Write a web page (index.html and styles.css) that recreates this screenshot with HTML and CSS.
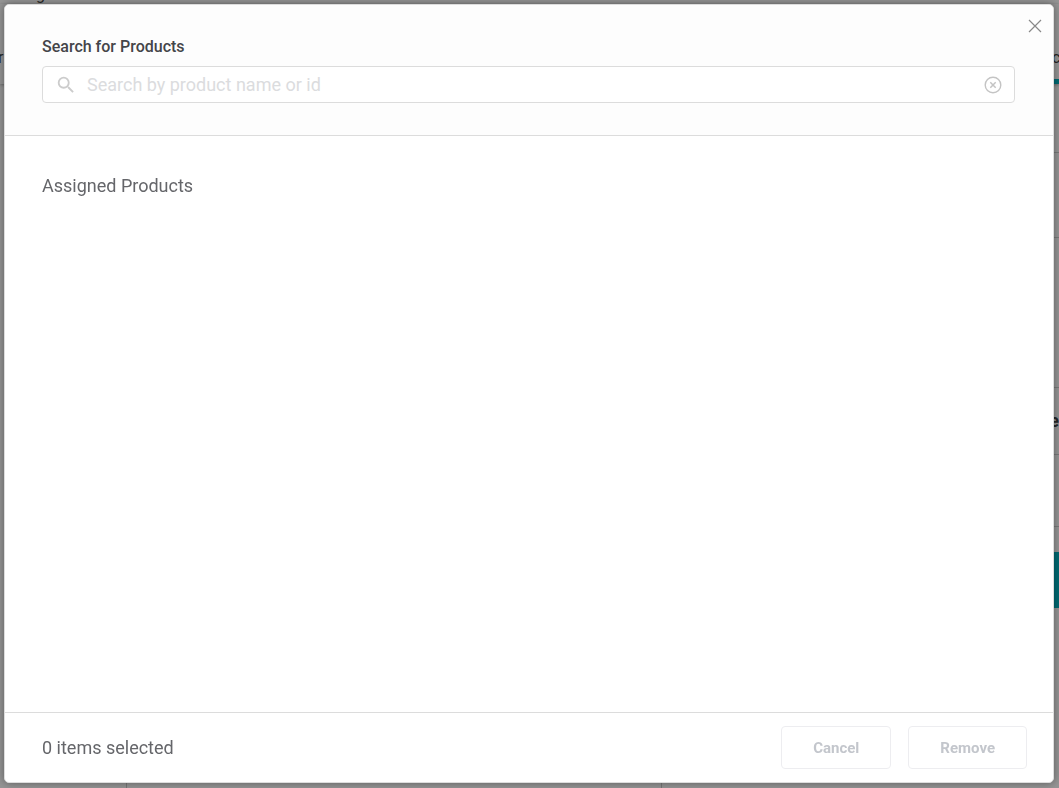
FILE: index.html
```
<!DOCTYPE html>
<html lang="en">
<head>
    <meta charset="UTF-8">
    <meta name="viewport" content="width=device-width, initial-scale=1.0">
    <title>Search for Products</title>
    <link rel="stylesheet" href="styles.css">
</head>
<body>
    <!-- page behind the dialog -->
    <div class="page" aria-hidden="true">
        <div class="page-title">g</div>
        <div class="page-tabs">
            <span>r</span>
            <span class="page-tab-active">c</span>
        </div>
        <div class="page-rows">
            <div class="page-row row-first"></div>
            <div class="page-row row-medium"></div>
            <div class="page-row row-large"></div>
            <div class="page-row row-small">e</div>
            <div class="page-row row-small"></div>
            <div class="page-action"></div>
        </div>
        <div class="page-columns">
            <div></div>
            <div></div>
            <div></div>
        </div>
    </div>

    <div class="overlay">
        <div class="modal" role="dialog" aria-modal="true" aria-label="Search for Products">
            <button class="modal-close" type="button" aria-label="Close">
                <svg width="14" height="14" viewBox="0 0 14 14" fill="none">
                    <path d="M1 1L13 13M13 1L1 13" stroke="currentColor" stroke-width="1.2"/>
                </svg>
            </button>

            <div class="modal-header">
                <label class="search-label" for="search">Search for Products</label>
                <div class="search-box">
                    <svg class="search-icon" width="22" height="22" viewBox="0 0 24 24" fill="currentColor">
                        <path d="M15.5 14h-.79l-.28-.27A6.47 6.47 0 0 0 16 9.5 6.5 6.5 0 1 0 9.5 16c1.61 0 3.09-.59 4.23-1.57l.27.28v.79l5 4.99L20.49 19l-4.99-5zm-6 0C7.01 14 5 11.99 5 9.5S7.01 5 9.5 5 14 7.01 14 9.5 11.99 14 9.5 14z"/>
                    </svg>
                    <input class="search-input" id="search" type="text" placeholder="Search by product name or id">
                    <button class="search-clear" type="button" aria-label="Clear search">
                        <svg width="18" height="18" viewBox="0 0 18 18" fill="none" stroke="currentColor">
                            <circle cx="9" cy="9" r="7.8" stroke-width="1.4"/>
                            <path d="M6.3 6.3L11.7 11.7M11.7 6.3L6.3 11.7" stroke-width="1.5"/>
                        </svg>
                    </button>
                </div>
            </div>

            <div class="modal-body">
                <h2 class="section-title">Assigned Products</h2>
            </div>

            <div class="modal-footer">
                <span class="selected-count">0 items selected</span>
                <div class="footer-actions">
                    <button class="btn" type="button" disabled>Cancel</button>
                    <button class="btn" type="button" disabled>Remove</button>
                </div>
            </div>
        </div>
    </div>
</body>
</html>
```
FILE: styles.css
```
* {
    box-sizing: border-box;
}
body {
    margin: 0;
    font-family: Roboto, "Liberation Sans", sans-serif;
    color: #65666a;
    background: #fff;
}
.page {
    display: flex;
    flex-direction: column;
    height: 100vh;
    overflow: hidden;
    color: #444;
}
.page-title {
    height: 18px;
    margin-top: -14px;
    padding-left: 36px;
    font-size: 16px;
    line-height: 18px;
}
.page-tabs {
    display: flex;
    justify-content: space-between;
    align-items: flex-end;
    height: 80px;
    box-shadow: 0 1px 3px rgba(0, 0, 0, 0.3);
    font-size: 16px;
    line-height: 42px;
}
.page-tabs span {
    margin-left: -2px;
    padding-bottom: 5px;
}
.page-tabs .page-tab-active {
    width: 7px;
    padding-bottom: 0;
    border-bottom: 5px solid #00b5c4;
}
.page-rows {
    align-self: flex-end;
    width: 90%;
    padding-top: 1px;
}
.page-row {
    border-bottom: 1px solid #d0d0d0;
    text-align: right;
    font-size: 18px;
    font-weight: bold;
    line-height: 66px;
}
.row-first {
    height: 68px;
}
.row-medium {
    height: 85px;
}
.row-large {
    height: 150px;
}
.row-small {
    height: 70px;
}
.row-large + .row-small {
    height: 67px;
}
.row-small + .row-small {
    height: 72px;
}
.page-action {
    height: 56px;
    margin-top: 25px;
    background: #00b5c4;
}
.page-columns {
    display: grid;
    grid-template-columns: 126px 1fr 398px;
    flex: 1;
}
.page-columns div + div {
    border-left: 1px solid #ccc;
}
.overlay {
    position: fixed;
    inset: 0;
    display: flex;
    padding: 4px 5px 5px 4px;
    background: rgba(0, 0, 0, 0.42);
}
.modal {
    position: relative;
    display: flex;
    flex: 1;
    flex-direction: column;
    border: 1px solid #ddd;
    border-radius: 5px;
    background: #fff;
    box-shadow: 0 0 8px rgba(0, 0, 0, 0.4);
}
.modal-close {
    position: absolute;
    top: 14px;
    right: 11px;
    display: flex;
    padding: 0;
    border: none;
    background: none;
    color: #888;
    cursor: pointer;
}
.modal-header {
    padding: 32px 38px 32px 37px;
    border-bottom: 1px solid #dcdcdc;
    border-radius: 5px 5px 0 0;
    background: #fdfdfd;
}
.search-label {
    display: block;
    margin-bottom: 9px;
    color: #444549;
    font-size: 16px;
    font-weight: 500;
    line-height: 20px;
}
.search-box {
    display: flex;
    align-items: center;
    height: 37px;
    padding: 0 12px;
    border: 1px solid #dcdcdc;
    border-radius: 4px;
    background: #fff;
}
.search-icon {
    margin-right: 10px;
    color: #ccc;
}
.search-input {
    flex: 1;
    min-width: 0;
    padding: 0;
    border: none;
    outline: none;
    background: none;
    color: inherit;
    font-family: inherit;
    font-size: 18px;
    line-height: 24px;
}
.search-input::placeholder {
    color: #dbdcde;
    opacity: 1;
}
.search-clear {
    display: flex;
    padding: 0;
    border: none;
    background: none;
    color: #c4c4c4;
    cursor: pointer;
}
.modal-body {
    flex: 1;
    padding: 38px 37px;
}
.section-title {
    margin: 0;
    font-size: 18px;
    font-weight: 400;
    line-height: 24px;
}
.modal-footer {
    display: flex;
    align-items: center;
    justify-content: space-between;
    height: 70px;
    padding: 0 26px 0 37px;
    border-top: 1px solid #dcdcdc;
}
.selected-count {
    font-size: 18px;
    line-height: 24px;
}
.footer-actions {
    display: flex;
    gap: 17px;
}
.btn {
    height: 43px;
    padding: 0 31px;
    border: 1px solid #ededf0;
    border-radius: 4px;
    background: #fff;
    color: #c3c6cc;
    font-family: inherit;
    font-size: 15px;
    font-weight: bold;
}
```
